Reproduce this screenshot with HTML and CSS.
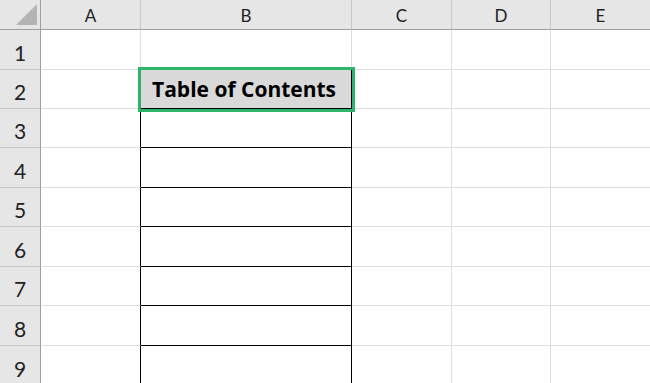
FILE: index.html
```html
<!DOCTYPE html>
<html lang="en">
<head>
    <meta charset="UTF-8">
    <title>Table of Contents</title>
    <link rel="stylesheet" href="styles.css">
</head>
<body>
    <div class="sheet">
        <div class="corner"><span class="tri"></span></div>
        <div class="colhead">A</div>
        <div class="colhead">B</div>
        <div class="colhead">C</div>
        <div class="colhead">D</div>
        <div class="colhead last">E</div>

        <div class="rowhead">1</div>
        <div class="cell"></div>
        <div class="cell"></div>
        <div class="cell"></div>
        <div class="cell"></div>
        <div class="cell last"></div>

        <div class="rowhead">2</div>
        <div class="cell edge"></div>
        <div class="cell box title">Table of Contents</div>
        <div class="cell"></div>
        <div class="cell"></div>
        <div class="cell last"></div>

        <div class="rowhead">3</div>
        <div class="cell edge"></div>
        <div class="cell box"></div>
        <div class="cell"></div>
        <div class="cell"></div>
        <div class="cell last"></div>

        <div class="rowhead">4</div>
        <div class="cell edge"></div>
        <div class="cell box"></div>
        <div class="cell"></div>
        <div class="cell"></div>
        <div class="cell last"></div>

        <div class="rowhead">5</div>
        <div class="cell edge"></div>
        <div class="cell box"></div>
        <div class="cell"></div>
        <div class="cell"></div>
        <div class="cell last"></div>

        <div class="rowhead">6</div>
        <div class="cell edge"></div>
        <div class="cell box"></div>
        <div class="cell"></div>
        <div class="cell"></div>
        <div class="cell last"></div>

        <div class="rowhead">7</div>
        <div class="cell edge"></div>
        <div class="cell box"></div>
        <div class="cell"></div>
        <div class="cell"></div>
        <div class="cell last"></div>

        <div class="rowhead">8</div>
        <div class="cell edge"></div>
        <div class="cell box"></div>
        <div class="cell"></div>
        <div class="cell"></div>
        <div class="cell last"></div>

        <div class="rowhead">9</div>
        <div class="cell edge"></div>
        <div class="cell box"></div>
        <div class="cell"></div>
        <div class="cell"></div>
        <div class="cell last"></div>
    </div>
</body>
</html>
```

FILE: styles.css
```css
html, body {
    margin: 0;
    padding: 0;
    background-color: #ffffff;
    overflow: hidden;
}
.sheet {
    display: grid;
    grid-template-columns: 41px 100px 211px 100px 99px 99px;
    grid-template-rows: 30px 40px 39px 39px 40px 39px 40px 39px 40px 40px;
    width: 650px;
    height: 383px;
    font-family: Lato, "Open Sans", sans-serif;
    color: #222222;
}
.corner {
    position: relative;
    background-color: #e6e6e6;
    border-right: 1px solid #9e9e9e;
    border-bottom: 1px solid #9e9e9e;
}
.corner .tri {
    position: absolute;
    right: 3px;
    bottom: 4px;
    width: 0;
    height: 0;
    border-left: 21px solid transparent;
    border-bottom: 21px solid #b4b4b4;
}
.colhead {
    display: flex;
    align-items: center;
    justify-content: center;
    padding-top: 2px;
    background-color: #e6e6e6;
    border-right: 1px solid #c8c8c8;
    border-bottom: 1px solid #9e9e9e;
    font-size: 17px;
}
.colhead.last {
    border-right: none;
}
.rowhead {
    display: flex;
    align-items: flex-end;
    justify-content: center;
    padding-bottom: 4px;
    box-sizing: border-box;
    background-color: #e6e6e6;
    border-right: 1px solid #9e9e9e;
    border-bottom: 1px solid #c8c8c8;
    font-size: 21px;
}
.cell {
    border-right: 1px solid #dedede;
    border-bottom: 1px solid #dedede;
}
.cell.last {
    border-right: none;
}
.cell.edge {
    border-right-color: #000000;
}
.cell.box {
    border-right-color: #000000;
    border-bottom-color: #000000;
}
.cell.title {
    display: flex;
    align-items: flex-end;
    padding: 0 0 5px 11px;
    background-color: #d9d9d9;
    outline: 3px solid #2db36a;
    outline-offset: 0;
    font-family: "Open Sans", Lato, sans-serif;
    font-weight: bold;
    font-size: 21px;
    color: #000000;
    z-index: 1;
}
```
